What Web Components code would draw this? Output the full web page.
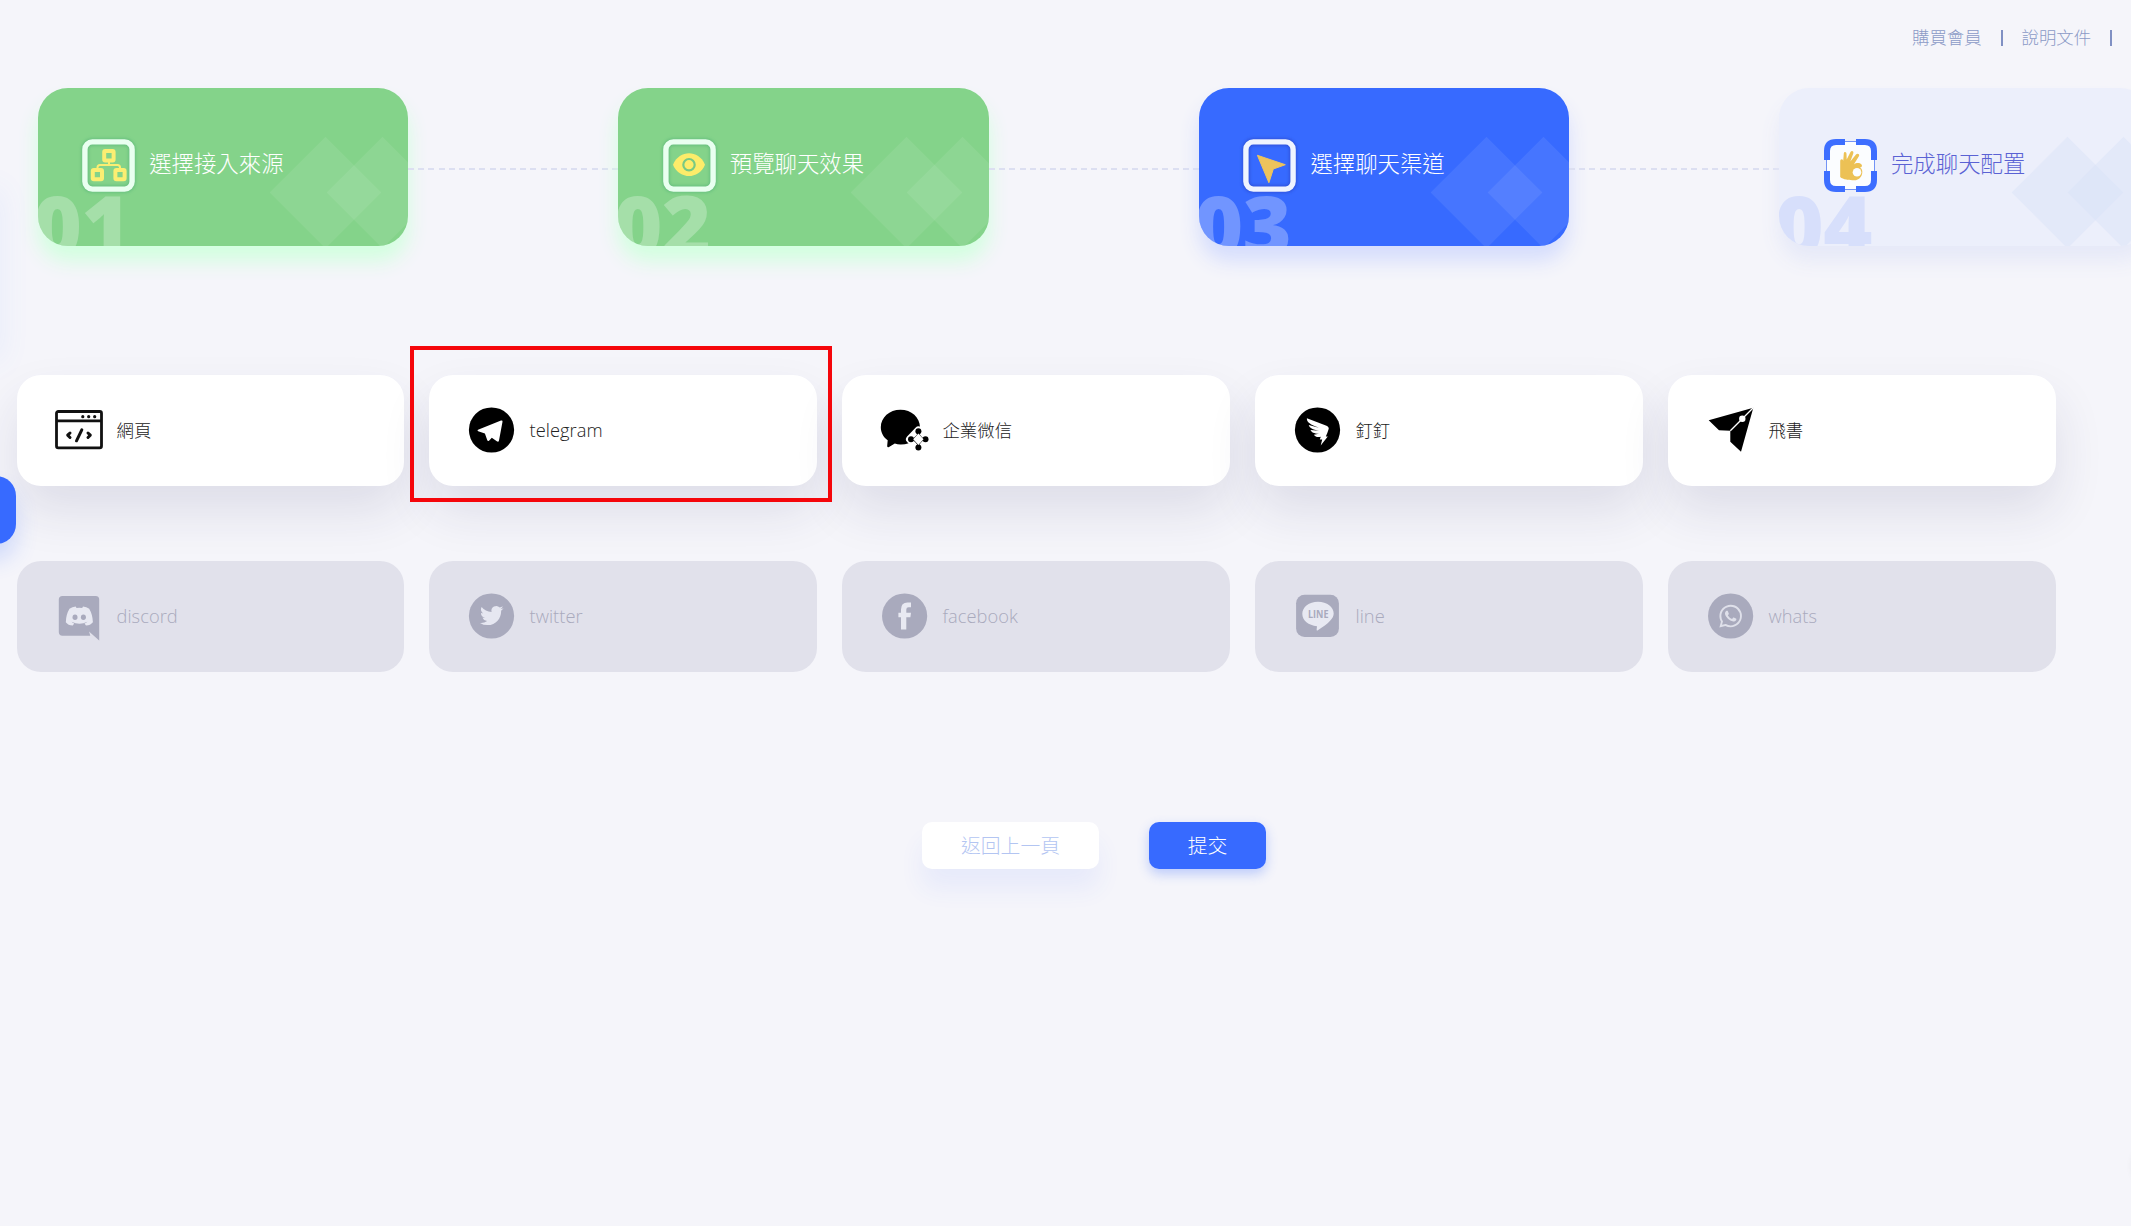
<!DOCTYPE html>
<html lang="zh-Hant">
<head>
<meta charset="utf-8">
<title>選擇聊天渠道</title>
<style>
html,body{margin:0;height:100%;overflow:hidden;background:#f5f5fa}
body{font-family:"Open Sans","Noto Sans CJK TC",sans-serif;font-weight:300}
</style>
</head>
<body>
<channel-page></channel-page>
<script>
const define = (name, html, setup) => customElements.define(name, class extends HTMLElement {
  constructor() {
    super();
    this.attachShadow({mode: 'open'}).innerHTML = html;
  }
  connectedCallback() { if (setup) setup(this, this.shadowRoot); }
});

const stepIcons = {
  tree: `<g fill="none" stroke="#fbee72" stroke-width="4"><rect x="22.2" y="12" width="9.4" height="9.4" rx="1"/><rect x="10.8" y="31" width="9.2" height="9.2" rx="1"/><rect x="33.4" y="31" width="9.2" height="9.2" rx="1"/></g><path d="M27 22v4M15.5 30v-1.500q0-2.500 2.500-2.500h17.500q2.500 0 2.500 2.500V30" fill="none" stroke="#fbee72" stroke-width="2"/>`,
  eye: `<path d="M10 25.700C13 18 20 14.300 26 14.300S39 18 42 25.700C39 33.400 32 37 26 37S13 33.400 10 25.700z" fill="#fdec6a"/><circle cx="26" cy="25.700" r="5.700" fill="none" stroke="#79c983" stroke-width="2.200"/>`,
  arrow: `<path d="M14.400 16.300L42.300 25.700L30.300 30L25.900 43.700z" fill="#edc35c" stroke="#edc35c" stroke-linejoin="round"/>`,
  hand: `<path d="M16.200 38V22.500C16 19.600 19 19.500 19.200 22L19.800 14.500C20.200 12.200 22.600 12.800 22.500 15L22.700 20.500L26.500 12.900C28 11 30.200 12.600 29.200 14.800L26.300 22.500L32.200 15.300C34 13.600 36 15.500 34.900 17.300L29.800 25.500C32 23.700 35.500 23.500 37.300 25.200C38.900 26.900 37.500 28.400 35.800 28.500C38 29.500 39 32.500 37.900 35.500C37 39 33.500 41.500 30.500 41.300C25 41.200 19 40.600 16.200 38z" fill="#ecc155"/><circle cx="33" cy="33.300" r="4.300" fill="#fbfdff"/>`
};

define('step-icon', `<style>
:host{display:block;width:53px;height:53px;flex:none}
svg{display:block;overflow:visible}
</style><svg width="53" height="53" viewBox="0 0 53 53"></svg>`, (h, r) => {
  const tone = h.getAttribute('tone');
  const edge = tone === 'done' ? '#e9fff0' : '#eff4ff';
  const inner = tone === 'done' ? '#5fb97c' : '#2b4ccf';
  const frame = tone === 'todo'
    ? `<rect x="2.500" y="2.500" width="48" height="48" rx="9" fill="#fbfdff" stroke="#7393f5"/>
       <path d="M3 21V12Q3 3 12 3H21M32 3H41Q50 3 50 12V21M50 32V41Q50 50 41 50H32M21 50H12Q3 50 3 41V32" fill="none" stroke="#3d6eff" stroke-width="6"/>`
    : `<defs><filter id="b" x="-20%" y="-20%" width="140%" height="140%"><feGaussianBlur stdDeviation="1.800"/></filter></defs>
       <rect x="3" y="3" width="47" height="47" rx="7.500" fill="none" stroke="${inner}" stroke-width="7.500" opacity=".75" filter="url(#b)"/>
       <rect x="2.900" y="2.900" width="47.200" height="47.200" rx="7.500" fill="none" stroke="${edge}" stroke-width="5.400"/>`;
  r.querySelector('svg').innerHTML = frame + stepIcons[h.getAttribute('name')];
});

define('step-card', `<style>
:host{display:block;flex:none;width:370.6px;height:157.700px;--bg:#84d38a;--sh:#d2ffdf;--num:rgba(255,255,255,.27);--dia:rgba(255,255,255,.08);--fg:#fff;border-radius:30px;background:var(--bg);color:var(--fg);box-shadow:0 15px 20px var(--sh)}
:host([tone=active]){--bg:#376aff;--sh:#d5ddfd;--num:rgba(255,255,255,.29);--dia:rgba(255,255,255,.08)}
:host([tone=todo]){--bg:#eceffb;--sh:#e6e9f8;--num:#d7dffb;--dia:rgba(214,226,248,.4);--fg:#5a62d4}
.box{position:relative;height:100%;border-radius:30px;overflow:hidden}
.row{position:relative;display:flex;align-items:center;gap:14px;padding:51px 0 0 44.500px}
.label{font-size:22.400px;line-height:30px;margin-top:-4px;white-space:nowrap}
.num{position:absolute;left:-5px;top:86px;font:800 84px/100px "Open Sans",sans-serif;color:var(--num);letter-spacing:-.5px}
.d{position:absolute;width:79px;height:79px;left:248.500px;top:64.500px;background:var(--dia);transform:rotate(45deg)}
.d+.d{left:305px}
</style><div class="box"><span class="d"></span><span class="d"></span><span class="num"></span>
<div class="row"><step-icon></step-icon><span class="label"><slot></slot></span></div></div>`, (h, r) => {
  r.querySelector('.num').textContent = h.getAttribute('num');
  const i = document.createElement('step-icon');
  i.setAttribute('tone', h.getAttribute('tone'));
  i.setAttribute('name', h.getAttribute('icon'));
  r.querySelector('step-icon').replaceWith(i);
});

define('step-link', `<style>
:host{display:block;flex:none;width:210px;height:2px;margin-top:4px;background:repeating-linear-gradient(90deg,#dcdff1 0 6px,transparent 6px 10.200px)}
</style>`);

const channelIcons = {
  web: `<g fill="none" stroke="#111" stroke-width="2.800"><rect x="1.500" y="5.500" width="45" height="36.300" rx="1.800"/><path d="M1.500 14.800H46.500"/></g><g fill="#111"><circle cx="27.800" cy="10.700" r="1.600"/><circle cx="33.700" cy="10.700" r="1.600"/><circle cx="39.700" cy="10.700" r="1.600"/></g><path d="M15 27L12.700 29.200L15 31.500M33 27L35.300 29.200L33 31.500M26.800 23.800L21.500 34.800" fill="none" stroke="#111" stroke-width="3" stroke-linecap="round" stroke-linejoin="round"/>`,
  telegram: `<circle cx="24.500" cy="24" r="22.600"/><path d="M11 23.800L34 14.500Q35.800 14 35.500 15.800L32 34.500Q31.500 36.500 29.800 35.300L24.800 31.700L22 34.700Q20.700 35.700 20.200 34L17.900 27.500L11.200 25.300Q9.800 24.500 11 23.800z" fill="#fff"/>`,
  wecom: `<path d="M20.400 3.700C31.500 3.700 40 11.500 40 21.200S32 38.700 20.500 38.500Q17.500 38.500 14.800 37.600L9 41Q6.900 42 7.200 39.500L7.700 34.300C3.400 31 .8 26.500 .8 21.200C.8 11.500 9.500 3.700 20.400 3.700z"/><path d="M38.400 24.500L46 33.300L38.400 42L30 33.300z" fill="#fff" stroke="#fff" stroke-width="8" stroke-linejoin="round"/><path d="M38.400 25.500Q40.500 31.500 45.700 33.300Q40 35.500 38.400 41.500Q36.500 35.500 30.700 33.300Q36.500 31.500 38.400 25.500z"/><circle cx="38.400" cy="25.200" r="3"/><circle cx="45.500" cy="33.300" r="3"/><circle cx="38.400" cy="41.500" r="3"/><circle cx="31" cy="33.300" r="3"/><path d="M38.400 27.600L43.500 33.300L38.400 39L33.200 33.300z" fill="#fff"/>`,
  dingtalk: `<circle cx="24.500" cy="24" r="22.600"/><path d="M13.900 12.300L33.500 19.800Q36.500 21.200 35.500 23.500Q34.500 27 32.800 30.500H34.800L27.700 39.500L29.200 33.500H26.800L27.800 30.800C24.500 31.500 22.500 31 20.800 28.800L26 27.800C21 27.500 18.500 26.500 17.500 24L26 24.800C19.500 23.500 16.500 21.800 15.800 19L25.800 21.800C17.500 18.500 13.500 16.500 13.900 12.300z" fill="#fff"/>`,
  feishu: `<path d="M2.700 14.300L47.300 1.700L35 45.700L24.300 35.700V24.700L13 24.300z"/><path d="M47.500 1.500L36.300 12.700L24.300 24.700" stroke="#fff" stroke-width="1.300" fill="none"/><circle cx="36.300" cy="12.700" r="3.200" fill="#fff"/>`,
  discord: `<path d="M7.500 4H40.700Q44.200 4 44.200 7.500V48.500L34 39.500L35.300 43.700H7.500Q3.800 43.700 3.800 40V7.500Q3.800 4 7.500 4z"/><path d="M14.500 16.800Q17.300 15 20.700 14.600L21.500 16Q24.300 15.500 27.200 16L28 14.600Q31.500 15 34.200 16.800Q37.600 22.500 37.900 30.200Q35.500 33.300 31 33.600L29.500 31.400Q31.300 30.800 32.400 29.800Q24.500 33.700 16.500 29.800Q17.500 30.800 19.200 31.400L17.800 33.600Q13 33.300 10.800 30.200Q11 22.500 14.500 16.800z" fill="#e8e9f2"/><ellipse cx="20" cy="25.300" rx="2.500" ry="2.700"/><ellipse cx="28.400" cy="25.300" rx="2.500" ry="2.700"/>`,
  twitter: `<circle cx="24.500" cy="24" r="22.600"/><path transform="translate(13 11.800) scale(.98)" fill="#e6e7f1" d="M23.953 4.570a10 10 0 01-2.825.775 4.958 4.958 0 002.163-2.723c-.951.555-2.005.959-3.127 1.184a4.920 4.920 0 00-8.384 4.482C7.690 8.095 4.067 6.130 1.640 3.162a4.822 4.822 0 00-.666 2.475c0 1.710.870 3.213 2.188 4.096a4.904 4.904 0 01-2.228-.616v.060a4.923 4.923 0 003.946 4.827 4.996 4.996 0 01-2.212.085 4.936 4.936 0 004.604 3.417 9.867 9.867 0 01-6.102 2.105c-.390 0-.779-.023-1.170-.067a13.995 13.995 0 007.557 2.209c9.053 0 13.998-7.496 13.998-13.985 0-.210 0-.420-.015-.630A9.935 9.935 0 0024 4.590z"/>`,
  facebook: `<circle cx="24.600" cy="24" r="22.600"/><path d="M21 37.600V25.300H18.400V20.700H21V17.500Q21 10.400 27.500 10.400H31V15.200H28.500Q26.300 15.200 26.300 17.500V20.700H31L30.400 25.300H26.300V37.600z" fill="#e8e9f2"/>`,
  line: `<rect x="3.100" y="2.800" width="42.800" height="42.300" rx="8.500"/><path d="M25 9.700C34 9.700 40.700 15 40.700 21.500C40.700 26.500 36 31 24.500 38.500Q23.300 39 23.700 37L24 34.200C15.500 33.500 9.300 28.500 9.300 21.800S16 9.700 25 9.700z" fill="#e8e9f2"/><text x="15" y="25.700" font-family="Open Sans,sans-serif" font-weight="700" font-size="10" textLength="20.500" lengthAdjust="spacingAndGlyphs">LINE</text>`,
  whats: `<circle cx="24.600" cy="24" r="22.600"/><path transform="translate(13.300 12.800) scale(.945)" fill="#dfe0ea" d="M17.472 14.382c-.297-.149-1.758-.867-2.030-.967-.273-.099-.471-.148-.670.150-.197.297-.767.966-.940 1.164-.173.199-.347.223-.644.075-.297-.150-1.255-.463-2.390-1.475-.883-.788-1.480-1.761-1.653-2.059-.173-.297-.018-.458.130-.606.134-.133.298-.347.446-.520.149-.174.198-.298.298-.497.099-.198.050-.371-.025-.520-.075-.149-.669-1.612-.916-2.207-.242-.579-.487-.500-.669-.510-.173-.008-.371-.010-.570-.010-.198 0-.520.074-.792.372-.272.297-1.040 1.016-1.040 2.479 0 1.462 1.065 2.875 1.213 3.074.149.198 2.096 3.200 5.077 4.487.709.306 1.262.489 1.694.625.712.227 1.360.195 1.871.118.571-.085 1.758-.719 2.006-1.413.248-.694.248-1.289.173-1.413-.074-.124-.272-.198-.570-.347m-5.421 7.403h-.004a9.870 9.870 0 01-5.031-1.378l-.361-.214-3.741.982.998-3.648-.235-.374a9.860 9.860 0 01-1.510-5.260c.001-5.450 4.436-9.884 9.888-9.884 2.640 0 5.122 1.030 6.988 2.898a9.825 9.825 0 012.893 6.994c-.003 5.450-4.437 9.884-9.885 9.884m8.413-18.297A11.815 11.815 0 0012.050 0C5.495 0 .160 5.335.157 11.892c0 2.096.547 4.142 1.588 5.945L.057 24l6.305-1.654a11.882 11.882 0 005.683 1.448h.005c6.554 0 11.890-5.335 11.893-11.893a11.821 11.821 0 00-3.480-8.413z"/>`
};

define('channel-card', `<style>
:host{display:flex;align-items:center;gap:14px;box-sizing:border-box;height:111px;padding-left:38px;border-radius:24px;background:#fff;color:#222;box-shadow:0 25px 50px rgba(40,35,90,.11)}
:host([disabled]){background:#e1e1eb;color:#a9aabd;box-shadow:none}
svg{display:block;flex:none;overflow:visible;fill:currentColor}
:host(:not([disabled])) svg{fill:#000}
span{font-size:17.400px;line-height:26px;white-space:nowrap;padding-top:0}
:host([latin]) span{font-size:18.300px;font-weight:350;letter-spacing:.05px}
</style><svg width="48" height="48" viewBox="0 0 48 48"></svg><span><slot></slot></span>`, (h, r) => {
  r.querySelector('svg').innerHTML = channelIcons[h.getAttribute('icon')];
});

define('top-links', `<style>
:host{display:flex;align-items:center;gap:19px;height:75px;padding-left:1912px;color:#8b9ac6;font-size:17.400px;white-space:nowrap}
i{width:2px;height:16px;background:#8090c3;flex:none}
span{flex:none;margin-top:-2px}
</style><span>購買會員</span><i></i><span>說明文件</span><i></i>`);

define('action-button', `<style>
:host{display:flex;align-items:center;justify-content:center;box-sizing:border-box;height:47px;width:177px;padding-bottom:2px;border-radius:10px;background:#fff;color:#b3c5f2;font-size:19.800px;box-shadow:0 20px 25px rgba(55,106,255,.07)}
:host([primary]){width:117px;background:#376aff;color:#fff;box-shadow:0 5px 12px rgba(55,106,255,.3)}
</style><slot></slot>`);

define('side-tab', `<style>
:host{display:block;position:absolute;left:-34px;top:476px;width:50.300px;height:67.700px;border-radius:20px;background:#376aff;box-shadow:0 15px 22px rgba(55,106,255,.2)}
</style>`);
define('side-glow', `<style>
:host{display:block;position:absolute;left:-20px;top:190px;width:20px;height:170px;box-shadow:0 0 30px rgba(90,150,255,.1)}
</style>`);
define('corner-bubble', `<style>
:host{display:block;position:absolute;left:2134px;top:1145px;width:42px;height:42px;border-radius:50%;box-shadow:0 0 8px rgba(0,0,0,.1)}
</style>`);
define('highlight-frame', `<style>
:host{display:block;position:absolute;left:410px;top:346px;width:421.500px;height:155.500px;box-sizing:border-box;border:4px solid #f5060b}
</style>`);

define('channel-page', `<style>
:host{display:block;position:relative;width:2131px;height:1226px;overflow:hidden;background:#f5f5fa}
.steps{display:flex;align-items:center;padding:13px 0 0 37.700px}
.grid{display:grid;grid-template-columns:repeat(5,387.800px);column-gap:25.200px;row-gap:75.200px;padding:129px 0 0 16.500px}
.actions{display:flex;gap:50px;padding:150px 0 0 922px}
</style>
<side-glow></side-glow>
<top-links></top-links>
<div class="steps">
<step-card tone="done" num="01" icon="tree">選擇接入來源</step-card><step-link></step-link>
<step-card tone="done" num="02" icon="eye">預覽聊天效果</step-card><step-link></step-link>
<step-card tone="active" num="03" icon="arrow">選擇聊天渠道</step-card><step-link></step-link>
<step-card tone="todo" num="04" icon="hand">完成聊天配置</step-card>
</div>
<div class="grid">
<channel-card icon="web">網頁</channel-card>
<channel-card latin icon="telegram">telegram</channel-card>
<channel-card icon="wecom">企業微信</channel-card>
<channel-card icon="dingtalk">釘釘</channel-card>
<channel-card icon="feishu">飛書</channel-card>
<channel-card latin disabled icon="discord">discord</channel-card>
<channel-card latin disabled icon="twitter">twitter</channel-card>
<channel-card latin disabled icon="facebook">facebook</channel-card>
<channel-card latin disabled icon="line">line</channel-card>
<channel-card latin disabled icon="whats">whats</channel-card>
</div>
<div class="actions"><action-button>返回上一頁</action-button><action-button primary>提交</action-button></div>
<side-tab></side-tab>
<corner-bubble></corner-bubble>
<highlight-frame></highlight-frame>`);
</script>
</body>
</html>
